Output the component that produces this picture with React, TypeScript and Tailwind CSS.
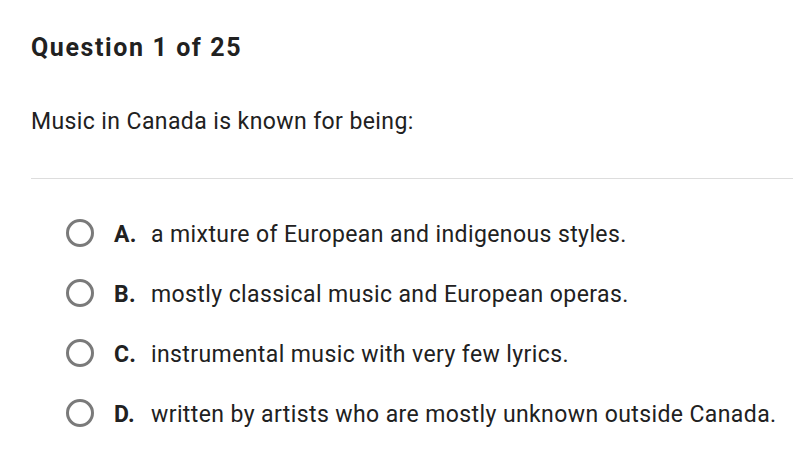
import React from 'react';

const options = [
  { letter: 'A.', text: 'a mixture of European and indigenous styles.' },
  { letter: 'B.', text: 'mostly classical music and European operas.' },
  { letter: 'C.', text: 'instrumental music with very few lyrics.' },
  { letter: 'D.', text: 'written by artists who are mostly unknown outside Canada.' },
];

export default function App() {
  return (
    <div className="w-[793px] h-[457px] bg-white text-[#212121] overflow-hidden" style={{ fontFamily: 'Roboto, sans-serif' }}>
      <div className="pl-[31px] pt-[33px]">
        <h1 className="text-[25px] leading-[30px] font-bold tracking-[1.6px]">Question 1 of 25</h1>
        <p className="mt-[44px] text-[23px] leading-[30px] tracking-[0.4px]">Music in Canada is known for being:</p>
      </div>
      <div className="ml-[31px] mt-[41px] border-t border-[#dddddd]" />
      <div className="pl-[66px] pt-[40px] flex flex-col gap-[32px]">
        {options.map((o) => (
          <div key={o.letter} className="flex items-center h-[28px]">
            <span className="w-[28px] h-[28px] rounded-full border-[3px] border-[#7a7a7a] shrink-0" />
            <div className="ml-[20px] mt-[4px] flex items-baseline leading-[28px]">
              <span className="w-[37px] text-[23px] font-bold tracking-[0.3px]">{o.letter}</span>
              <span className="text-[23px] tracking-[0.4px]">{o.text}</span>
            </div>
          </div>
        ))}
      </div>
    </div>
  );
}
